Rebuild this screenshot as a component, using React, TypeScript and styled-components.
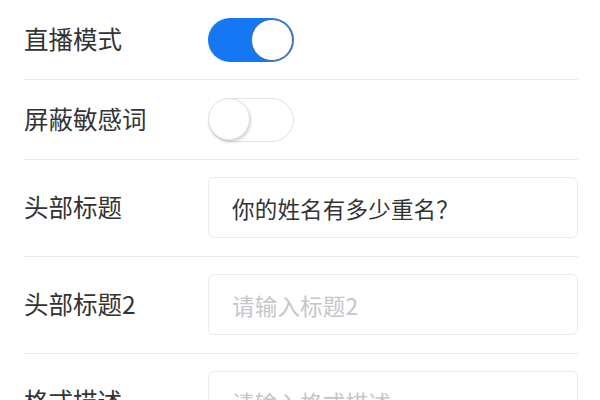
import React from "react";
import styled, { createGlobalStyle } from "styled-components";

const Global = createGlobalStyle`
  html, body { margin: 0; padding: 0; background: #fff; }
  body { font-family: "Noto Sans CJK SC", "Noto Sans", sans-serif; overflow: hidden; }
  * { box-sizing: border-box; }
`;

const Page = styled.div`
  width: 600px;
  height: 400px;
  overflow: hidden;
  padding: 0 22px 0 24px;
  background: #fff;
`;

const Row = styled.div<{ $tall?: boolean }>`
  display: flex;
  align-items: center;
  height: ${(p) => (p.$tall ? "97px" : "80px")};
  padding: ${(p) => (p.$tall ? "17px 0 18px" : "0")};
  border-bottom: 1px solid #ebebeb;
`;

const Label = styled.div`
  width: 184px;
  flex: none;
  font-size: 24.5px;
  color: #333;
  line-height: 1;
`;

const Field = styled.div<{ $placeholder?: boolean }>`
  flex: 1;
  height: 61px;
  border: 1px solid #ececec;
  border-radius: 6px;
  display: flex;
  align-items: center;
  padding-left: 23px;
  font-size: 22.5px;
  letter-spacing: 0.2px;
  color: ${(p) => (p.$placeholder ? "#c4c6cc" : "#333")};
`;

const Track = styled.div<{ $on?: boolean }>`
  width: 86px;
  height: 44px;
  border-radius: 22px;
  position: relative;
  background: ${(p) => (p.$on ? "#1677f5" : "#fff")};
  border: ${(p) => (p.$on ? "none" : "1.5px solid #e3e3e3")};
`;

const Knob = styled.div<{ $on?: boolean }>`
  position: absolute;
  top: ${(p) => (p.$on ? "1px" : "-1px")};
  ${(p) => (p.$on ? "right: 1px;" : "left: -1px;")}
  width: 42px;
  height: 42px;
  border-radius: 50%;
  background: #fff;
  border: ${(p) => (p.$on ? "1px solid #5b6b88" : "1px solid #e2e2e2")};
  box-shadow: ${(p) => (p.$on ? "none" : "1px 2px 3px rgba(0,0,0,0.18)")};
`;

const Switch = ({ on }: { on?: boolean }) => (
  <Track $on={on}>
    <Knob $on={on} />
  </Track>
);

export default function App() {
  return (
    <>
      <Global />
      <Page>
        <Row>
          <Label>直播模式</Label>
          <Switch on />
        </Row>
        <Row>
          <Label>屏蔽敏感词</Label>
          <Switch />
        </Row>
        <Row $tall>
          <Label>头部标题</Label>
          <Field>你的姓名有多少重名？</Field>
        </Row>
        <Row $tall>
          <Label>头部标题2</Label>
          <Field $placeholder>请输入标题2</Field>
        </Row>
        <Row $tall>
          <Label>格式描述</Label>
          <Field $placeholder>请输入格式描述</Field>
        </Row>
      </Page>
    </>
  );
}
